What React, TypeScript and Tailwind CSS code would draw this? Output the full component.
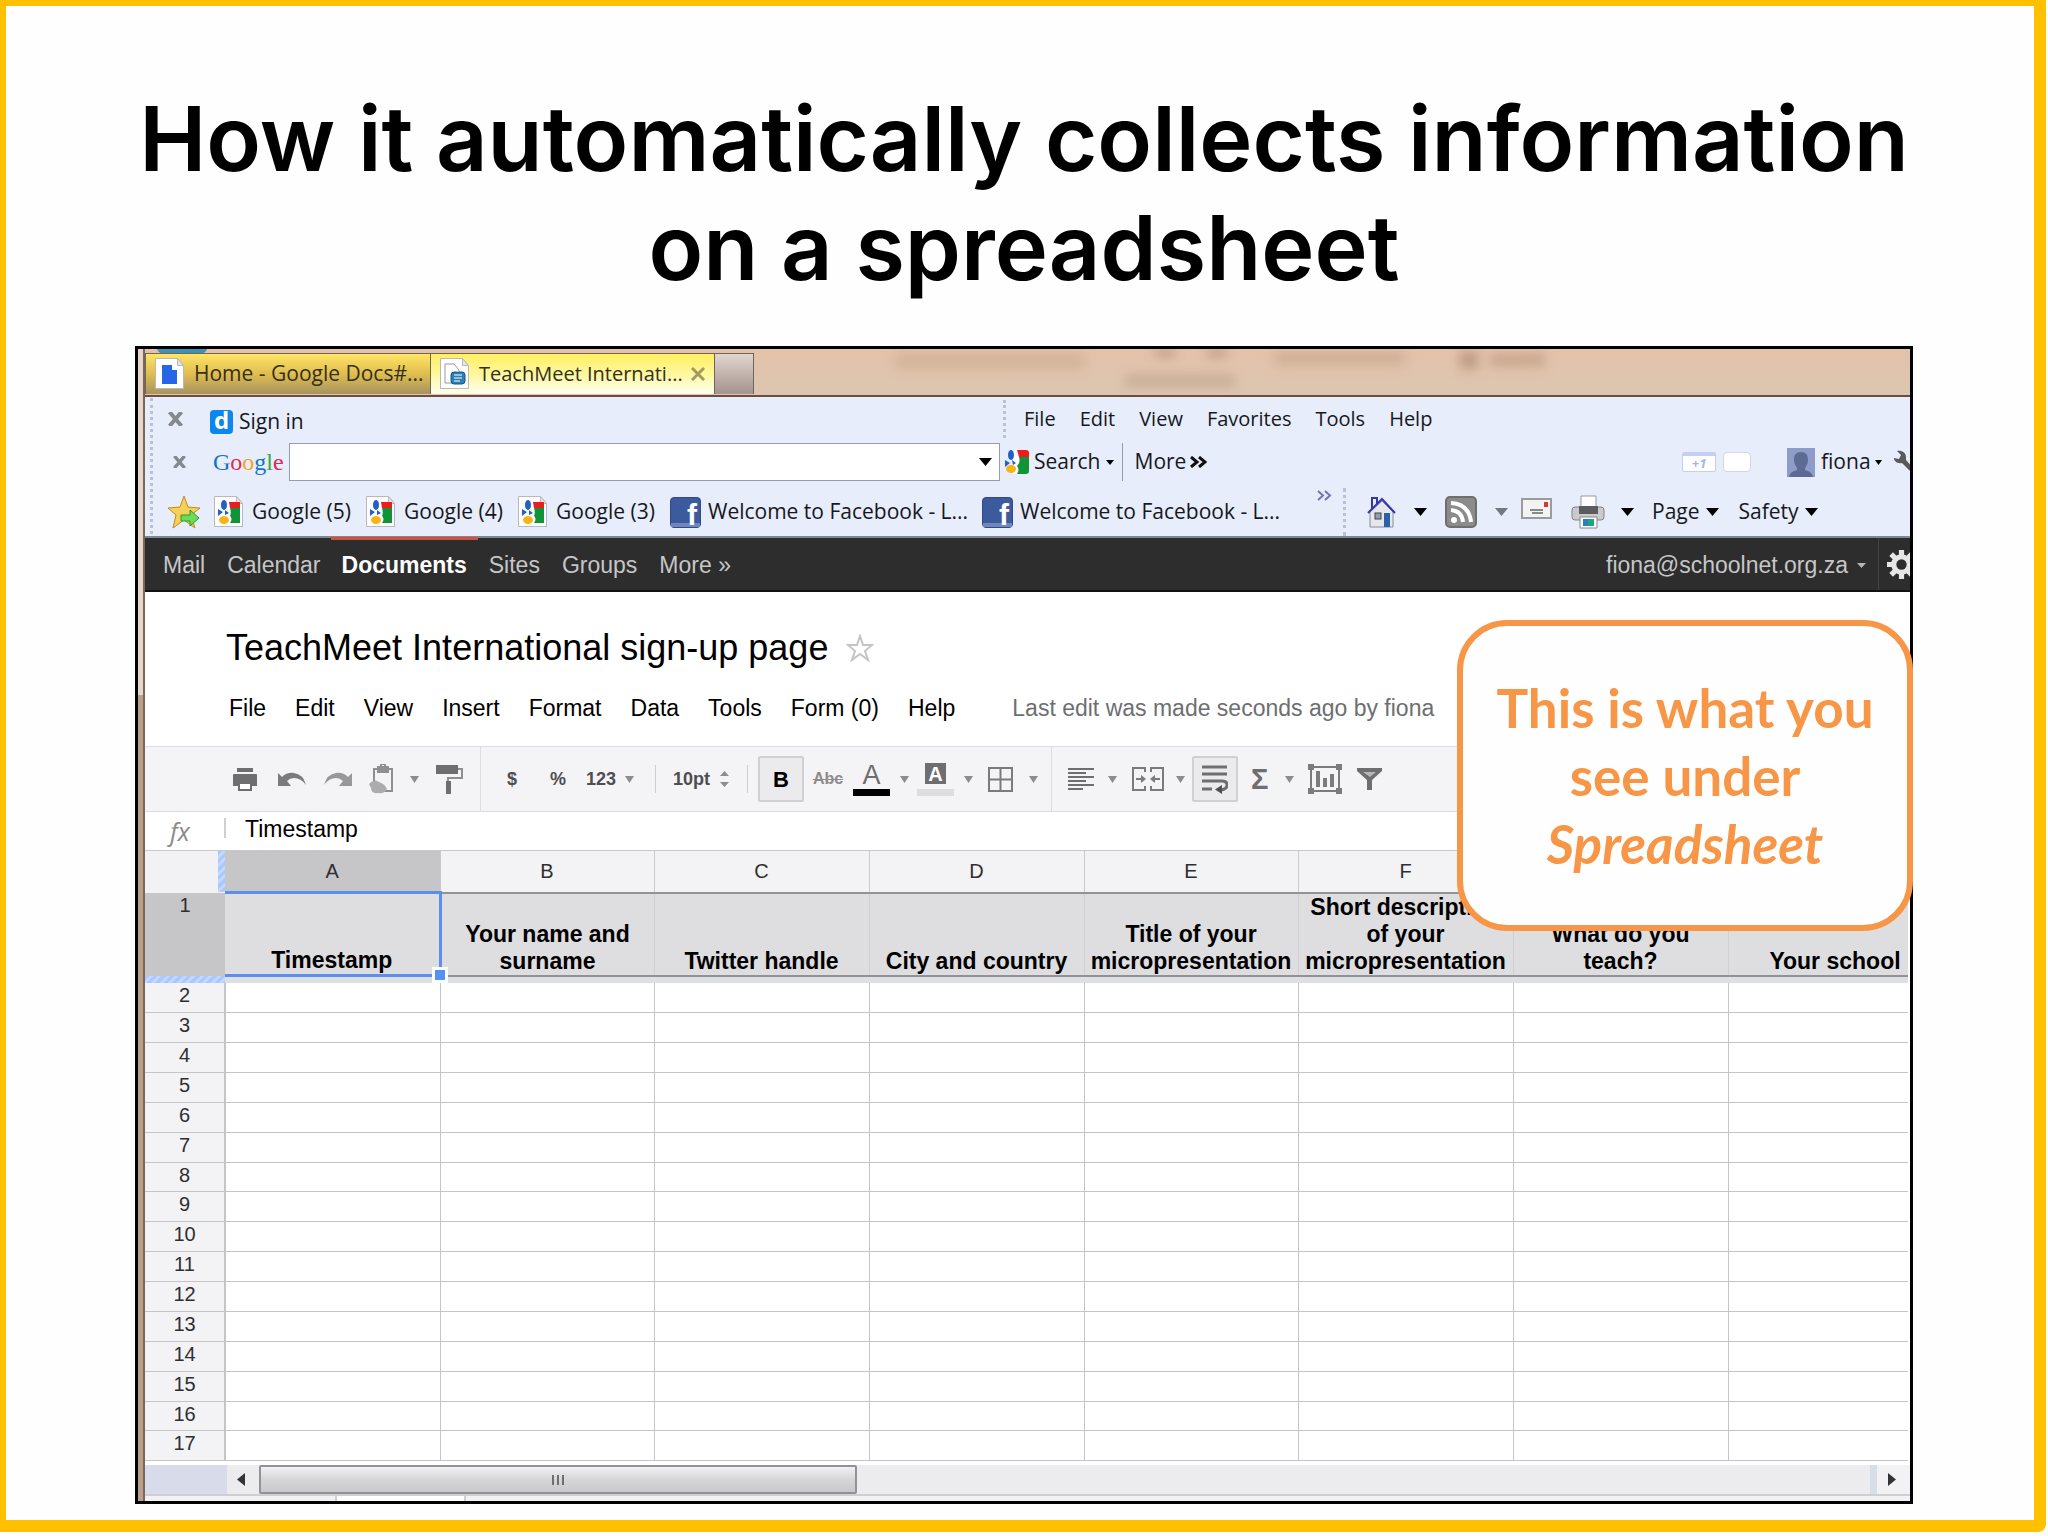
import React from 'react';

// width classes follow the sheet's own column sizes
const columns = [
  { letter: 'A', title: 'Timestamp', width: 'w-[215px]' },
  { letter: 'B', title: 'Your name and surname', width: 'w-[214px]' },
  { letter: 'C', title: 'Twitter handle', width: 'w-[215px]' },
  { letter: 'D', title: 'City and country', width: 'w-[215px]' },
  { letter: 'E', title: 'Title of your micropresentation', width: 'w-[214px]' },
  { letter: 'F', title: 'Short description of your micropresentation', width: 'w-[215px]' },
  { letter: 'G', title: 'What do you teach?', width: 'w-[215px]' },
  { letter: 'H', title: 'Your school', width: 'w-[214px]' },
];

const rows = Array.from({ length: 16 }, (_, i) => i + 2);

const Caret: React.FC<{ className?: string }> = ({ className = 'w-[13px] h-[8px] text-black' }) => (
  <svg className={`shrink-0 ${className}`} viewBox="0 0 10 6" preserveAspectRatio="none" fill="currentColor">
    <path d="M0 0h10L5 6z" />
  </svg>
);

const ToolCaret = () => <Caret className="w-[9px] h-[7px] text-[#8d8b8e]" />;

const GoogleMark: React.FC<{ className?: string }> = ({ className }) => (
  <svg className={`shrink-0 ${className}`} viewBox="0 0 24 24">
    <path d="M8 0h13a3 3 0 0 1 3 3v18a3 3 0 0 1-3 3H8z" fill="#fff" />
    <path d="M12 0h9a3 3 0 0 1 3 3v4H14z" fill="#ee1c1c" />
    <path d="M14 7h10v14a3 3 0 0 1-3 3h-9c2-3 2-6 0-8 3-3 3-6 2-9z" fill="#119438" />
    <ellipse cx="6" cy="5" rx="3" ry="5" fill="#2260c8" />
    <path d="M0 10l5 3-5 4zM7 10l4 3-3 2z" fill="#2260c8" />
    <ellipse cx="6" cy="19" rx="5" ry="4" fill="#f9b314" />
  </svg>
);

// white sheet with folded corner, used behind favicons
const Sheet: React.FC<{ children: React.ReactNode }> = ({ children }) => (
  <svg className="w-[31px] h-[32px] shrink-0" viewBox="0 0 31 32">
    <path d="M2 2h21l6 7v22H2z" fill="#9a9a9a" />
    <path d="M.5.5h22l6 7v23H.5z" fill="#fff" stroke="#b9b9b9" />
    <path d="M22.500.5v7h6z" fill="#e4e4e4" stroke="#b9b9b9" />
    {children}
  </svg>
);

const GoogleSheetIcon = () => (
  <Sheet>
    <path d="M15 6h11v6H16z" fill="#ee1c1c" />
    <path d="M16 12h10v15h-10c2-3 2-5 0-7 1-2 1-5 0-8z" fill="#119438" />
    <ellipse cx="10" cy="9" rx="3" ry="5" fill="#2260c8" />
    <path d="M4 13l5 3-5 4zM11 14l4 3-4 2z" fill="#2260c8" />
    <ellipse cx="10" cy="24" rx="5" ry="4" fill="#f9b314" />
  </Sheet>
);

const FacebookIcon = () => (
  <span className="relative w-[31px] h-[31px] shrink-0 flex justify-end rounded-sm border border-[#2f4a86] bg-[#3d5a9c] pr-[3px]">
    <span className="absolute inset-x-0 bottom-0 h-[4px] bg-[#6f87bb]" />
    <span className="relative font-['Liberation_Sans',sans-serif] text-[30px] leading-[34px] font-bold text-white">f</span>
  </span>
);

const Grip: React.FC<{ className: string }> = ({ className }) => (
  <div className={`w-0 shrink-0 border-l-3 border-dotted border-[#b9c1d3] ${className}`} />
);

const BrowserTabs = () => (
  <div className="relative h-[48px] flex items-end pb-px bg-linear-to-b from-[#e4c2a9] to-[#dcc6b0] border-b-2 border-[#6d4c41]">
    <div className="absolute inset-0 overflow-hidden">
      <div className="absolute left-[12px] -top-[8px] w-[50px] h-[13px] rounded-full bg-[#3d93b5]" />
      <div className="absolute inset-0 blur-[6px] opacity-60">
        <div className="absolute left-[750px] top-[4px] w-[190px] h-[16px] bg-[#cba98f]" />
        <div className="absolute left-[980px] top-[26px] w-[110px] h-[12px] bg-[#b99c86]" />
        <div className="absolute left-[1010px] top-0 w-[20px] h-[7px] bg-[#957462]" />
        <div className="absolute left-[1062px] top-0 w-[20px] h-[7px] bg-[#957462]" />
        <div className="absolute left-[1130px] top-[3px] w-[130px] h-[13px] bg-[#c39f86]" />
        <div className="absolute left-[1315px] top-[2px] w-[18px] h-[18px] bg-[#a58068]" />
        <div className="absolute left-[1345px] top-[5px] w-[55px] h-[12px] bg-[#b58f77]" />
      </div>
    </div>
    <div role="tablist" className="relative flex h-[41px] text-[20px] text-[#33301c]">
      <button role="tab" aria-selected="false" className="w-[286px] flex items-center gap-2 pl-[9px] border border-b-0 border-[#6f6657] bg-linear-to-b from-[#ffe566] via-[#e0bd4f] to-[#a8945e]">
        <Sheet><path d="M7 7h10v5h5v14H7z" fill="#2565e6" /></Sheet>
        <span className="whitespace-nowrap text-[21px]">Home - Google Docs#...</span>
      </button>
      <button role="tab" aria-selected="true" className="w-[283px] flex items-center gap-2 pl-[9px] border-t border-[#6f6657] bg-linear-to-b from-[#ffef5e] via-[#fff79c] to-[#fffff0]">
        <Sheet>
          <path d="M5 6h9l5 6v13H5z" fill="#fff" stroke="#999" />
          <rect x="11" y="14" width="14" height="12" rx="3" fill="#2b7fb5" stroke="#14587f" />
          <path d="M14 17h8M14 20h8M14 23h6M18 14q0-4-3-4" stroke="#fff" fill="none" />
        </Sheet>
        <span className="whitespace-nowrap">TeachMeet Internati...</span>
        <svg className="ml-auto mr-[9px] w-[14px] h-[14px] shrink-0" viewBox="0 0 14 14" stroke="#a39a5e" strokeWidth="3"><path d="M1 1l12 12M13 1L1 13" /></svg>
      </button>
      <button aria-label="New tab" className="w-[40px] border border-b-0 border-[#6f6657] bg-linear-to-b from-[#e2d6d0] to-[#a3948c]" />
    </div>
  </div>
);

const BrowserToolbars = () => (
  <div className="h-[141px] flex bg-[#e7edfa] border-b-2 border-[#7c8a90] text-[21px] text-[#16181d] whitespace-nowrap">
    <Grip className="ml-[5px] h-[136px] mt-[1px]" />
    <div className="flex-1 min-w-0">
      {/* menu row */}
      <div className="h-[43px] flex items-center pl-[15px]">
        <svg className="w-[15px] h-[14px] shrink-0" viewBox="0 0 14 14" stroke="#85898f" strokeWidth="4"><path d="M1 0l12 14M13 0L1 14" /></svg>
        <a href="#signin" className="ml-[27px] w-[793px] flex items-center gap-[6px] pt-[6px]">
          <span className="w-[23px] h-[24px] rounded bg-[#0d86f0] text-white font-bold text-[24px] leading-[20px] text-center">d</span>
          Sign in
        </a>
        <Grip className="h-[38px] mr-[18px]" />
        <nav className="flex gap-[24px] text-[20px]">
          <button>File</button>
          <button>Edit</button>
          <button>View</button>
          <button>Favorites</button>
          <button>Tools</button>
          <button>Help</button>
        </nav>
      </div>
      {/* google bar */}
      <div className="h-[44px] flex items-center pl-[20px]">
        <svg className="w-[13px] h-[12px] shrink-0" viewBox="0 0 14 14" stroke="#85898f" strokeWidth="4"><path d="M1 0l12 14M13 0L1 14" /></svg>
        <span className="ml-[27px] w-[76px] font-['Liberation_Serif',serif] text-[24px] leading-[28px]">
          <span className="text-[#1374c4]">G</span><span className="text-[#e02a50]">o</span><span className="text-[#f0a81c]">o</span><span className="text-[#1374c4]">g</span><span className="text-[#3aa843]">l</span><span className="text-[#e02a50]">e</span>
        </span>
        <div className="w-[711px] h-[38px] flex items-center border border-[#9a9cab] bg-white pr-[7px]">
          <input aria-label="Search Google" className="flex-1 h-full px-2 outline-none" />
          <button aria-label="Search history"><Caret /></button>
        </div>
        <button className="ml-[5px] flex items-center gap-[5px]">
          <GoogleMark className="w-[24px] h-[24px]" />
          Search
          <Caret className="w-[8px] h-[5px] text-black" />
        </button>
        <div className="ml-[8px] mr-[12px] w-px h-[38px] bg-[#989ba5]" />
        <button className="flex items-center gap-1">
          More
          <svg className="w-[17px] h-[12px]" viewBox="0 0 17 12" fill="none" stroke="#111" strokeWidth="3"><path d="M1 1l6 5-6 5M9 1l6 5-6 5" /></svg>
        </button>
        <div className="ml-auto w-[228px] flex items-center shrink-0">
          <span className="w-[34px] h-[20px] shrink-0 rounded-xs border border-t-4 border-[#c3cff5] bg-white text-[13px] leading-[15px] font-bold italic text-center text-[#a3b5ee]">+1</span>
          <span className="ml-[7px] w-[28px] h-[20px] shrink-0 rounded border border-[#d5d5dc] bg-white" />
          <svg className="ml-[36px] w-[28px] h-[29px] shrink-0" viewBox="0 0 28 29">
            <rect width="28" height="29" fill="#8e9cc9" />
            <path d="M14 4c5 0 7 3 7 8 0 4-2 6-3 8v2c3 1 7 2 8 7H2c1-5 5-6 8-7v-2c-1-2-3-4-3-8 0-5 2-8 7-8z" fill="#5d6b93" />
          </svg>
          <button className="ml-[6px] flex items-center gap-1">fiona<Caret className="w-[7px] h-[5px] text-black" /></button>
          <svg className="ml-[10px] w-[24px] h-[24px] shrink-0" viewBox="0 0 24 24" fill="#5a5a5c"><path d="M2 8l5 1 2-4-4-4c5-1 9 2 9 6v3l10 11-3 3L10 13c-5 1-8-2-8-5z" /></svg>
        </div>
      </div>
      {/* favourites */}
      <div className="h-[52px] flex items-center pl-[14px] pt-[4px]">
        <svg className="w-[34px] h-[34px] shrink-0" viewBox="0 0 34 34">
          <path d="M17 1l4 11 12 1-9 7 4 13-11-8-11 8 3-13-8-7 12-1z" fill="#f8cf57" stroke="#c58a22" />
          <path d="M14 20h9v-5l9 8-9 8v-5h-9z" fill="#6edb58" stroke="#2b9a32" />
        </svg>
        <a href="#g5" className="ml-[13px] w-[152px] flex items-center gap-[7px]"><GoogleSheetIcon />Google (5)</a>
        <a href="#g4" className="w-[152px] flex items-center gap-[7px]"><GoogleSheetIcon />Google (4)</a>
        <a href="#g3" className="w-[152px] flex items-center gap-[7px]"><GoogleSheetIcon />Google (3)</a>
        <a href="#fb1" className="w-[312px] flex items-center gap-[7px]"><FacebookIcon />Welcome to Facebook - L...</a>
        <a href="#fb2" className="w-[335px] flex items-center gap-[7px]"><FacebookIcon />Welcome to Facebook - L...</a>
        <svg className="w-[15px] h-[11px] mb-[34px] shrink-0" viewBox="0 0 15 11" fill="none" stroke="#7276ae" strokeWidth="2"><path d="M1 1l5 4.500-5 4.500M8 1l5 4.500-5 4.500" /></svg>
        <Grip className="ml-[11px] h-[48px]" />
        <div className="ml-[21px] flex items-center">
          <button aria-label="Home">
            <svg className="w-[29px] h-[31px]" viewBox="0 0 29 31">
              <path d="M3 15L15 4l11 11v15H3z" fill="#e6e7ec" stroke="#8a8c98" />
              <path d="M5 12V1h5v6M1 16L15 2l13 14" fill="none" stroke="#3236b0" strokeWidth="2" />
              <rect x="8" y="16" width="6" height="6" fill="#8d9fb5" stroke="#444" />
              <rect x="17" y="16" width="6" height="14" fill="#2a62a8" />
            </svg>
          </button>
          <Caret className="ml-[18px] w-[13px] h-[8px] text-black" />
          <button aria-label="Feeds" className="ml-[18px]">
            <svg className="w-[32px] h-[32px]" viewBox="0 0 32 32" fill="none" stroke="#fff" strokeWidth="4">
              <rect x="1" y="1" width="30" height="30" rx="4" fill="#8b8b8b" stroke="#6e6e6e" strokeWidth="2" />
              <circle cx="9" cy="24" r="3" fill="#fff" stroke="none" />
              <path d="M6 14q11 1 12 12M6 7q18 1 20 19" />
            </svg>
          </button>
          <Caret className="ml-[18px] w-[13px] h-[8px] text-[#74777f]" />
          <button aria-label="Mail" className="ml-[13px]">
            <svg className="w-[31px] h-[22px] mb-[6px]" viewBox="0 0 31 22">
              <rect x="1" y="1" width="29" height="19" fill="#f3f3f3" stroke="#9b9b9b" strokeWidth="2" />
              <rect x="23" y="4" width="4" height="5" fill="#d33" />
              <path d="M9 12h13M11 15h11" stroke="#8a8a8a" strokeWidth="2" />
            </svg>
          </button>
          <button aria-label="Print" className="ml-[19px]">
            <svg className="w-[34px] h-[34px]" viewBox="0 0 34 34">
              <path d="M10 1h15v12H10z" fill="#fff" stroke="#999" />
              <rect x="1" y="12" width="32" height="13" rx="3" fill="#c9c9ce" stroke="#858589" />
              <rect x="8" y="11" width="19" height="8" fill="#5c5c60" />
              <path d="M9 22h17v11H9z" fill="#fff" stroke="#888" />
              <path d="M12 24h5v7h-5z" fill="#2a7fc0" />
              <path d="M17 24h6v7h-6z" fill="#1ba586" />
            </svg>
          </button>
          <Caret className="ml-[16px] w-[13px] h-[8px] text-black" />
          <button className="ml-[18px] flex items-center gap-[6px]">Page<Caret /></button>
          <button className="ml-[20px] flex items-center gap-[6px]">Safety<Caret /></button>
        </div>
      </div>
    </div>
  </div>
);

const AccountBar = () => (
  <div className="h-[54px] flex items-stretch pl-[18px] bg-[#2d2d2e] border-b-2 border-[#111] text-[23px] text-[#c6c6c6] whitespace-nowrap">
    <nav className="flex items-stretch pt-[2px]">
      <a href="#mail" className="flex items-center mr-[22px]">Mail</a>
      <a href="#calendar" className="flex items-center">Calendar</a>
      <a href="#documents" className="-mt-[3px] flex items-center ml-[10px] mr-[11px] px-[11px] pt-[1px] border-t-3 border-t-[#cf5140] font-bold text-white">Documents</a>
      <a href="#sites" className="flex items-center">Sites</a>
      <a href="#groups" className="flex items-center mx-[22px]">Groups</a>
      <a href="#more" className="flex items-center">More »</a>
    </nav>
    <button className="ml-auto flex items-center gap-[9px] pt-[2px] pr-[12px] border-r border-[#454545]">
      fiona@schoolnet.org.za
      <Caret className="w-[9px] h-[5px] text-[#b5b5b5]" />
    </button>
    <button aria-label="Settings" className="w-[31px] pl-[8px] overflow-hidden">
      <svg className="w-[29px] h-[29px]" viewBox="0 0 28 28">
        <circle cx="14" cy="14" r="7" fill="none" stroke="#e6e6e6" strokeWidth="6" />
        <path d="M14 0v28M0 14h28M4 4l20 20M24 4L4 24" stroke="#e6e6e6" strokeWidth="5" />
        <circle cx="14" cy="14" r="5" fill="#2d2d2e" />
      </svg>
    </button>
  </div>
);

const DocHeader = () => (
  <header className="h-[154px] pl-[81px] text-black whitespace-nowrap">
    <div className="h-[84px] pt-[28px] flex items-center gap-[18px]">
      <h2 className="text-[36px] leading-[40px]">TeachMeet International sign-up page</h2>
      <button aria-label="Star">
        <svg className="w-[28px] h-[28px]" viewBox="0 0 28 28" fill="#fff" stroke="#c4c4c6" strokeWidth="2"><path d="M14 2l3 9h9l-7 6 3 9-8-6-8 6 3-9-7-6h9z" /></svg>
      </button>
    </div>
    <div className="mt-[18px] pl-[3px] flex text-[23px] leading-[28px]">
      <nav className="flex gap-[29px]">
        <button>File</button>
        <button>Edit</button>
        <button>View</button>
        <button>Insert</button>
        <button>Format</button>
        <button>Data</button>
        <button>Tools</button>
        <button>Form (0)</button>
        <button>Help</button>
      </nav>
      <span className="ml-[57px] text-[#6e6e70]">Last edit was made seconds ago by fiona</span>
    </div>
  </header>
);

const DocToolbar = () => (
  <div role="toolbar" aria-label="Formatting" className="h-[66px] flex items-center pl-[88px] bg-[#f4f3f5] border-y border-[#dddcdf] text-[18px] font-bold text-[#4e4d50]">
    <button aria-label="Print" className="w-[45px]">
      <svg className="w-[24px] h-[23px]" viewBox="0 0 24 23" fill="#6e6d70"><path d="M4 0h16v4H4zM1 6h22q1 0 1 1v11h-5v-4H5v4H0V7q0-1 1-1z" /><path d="M6 15h12v7H6z" fill="#fff" stroke="#6e6d70" strokeWidth="2" /></svg>
    </button>
    <button aria-label="Undo" className="w-[46px]">
      <svg className="w-[28px] h-[16px]" viewBox="0 0 28 16" fill="#7b7a7d"><path d="M0 2l4 4q5-5 12-4 9 1 12 12-5-7-12-7-4 0-7 3l4 5H0z" /></svg>
    </button>
    <button aria-label="Redo" className="w-[45px]">
      <svg className="w-[28px] h-[16px]" viewBox="0 0 28 16" fill="#98979a"><path d="M28 2l-4 4q-5-5-12-4-9 1-12 12 5-7 12-7 4 0 7 3l-4 5h13z" /></svg>
    </button>
    <button aria-label="Paste" className="w-[67px] flex items-center gap-[15px]">
      <svg className="w-[26px] h-[30px]" viewBox="0 0 26 30" fill="none" stroke="#8f8e91" strokeWidth="2"><path d="M5 5h18v22H5z" /><path d="M9 3h10v5H9z" fill="#8f8e91" /><path d="M12 0h4v3h-4z" /><path d="M0 20q5-6 10-2 6 2 8 7-2 5-9 4Q2 30 2 24z" fill="#acabae" stroke="none" /></svg>
      <ToolCaret />
    </button>
    <button aria-label="Paint format" className="w-[44px]">
      <svg className="w-[27px] h-[29px]" viewBox="0 0 27 29" fill="#6e6d70"><path d="M0 0h22v9H0z" /><path d="M22 4h4v9H12v4" fill="none" stroke="#8f8e91" strokeWidth="2" /><path d="M10 16h5v13h-5z" /></svg>
    </button>
    <div className="w-px h-full bg-[#dddcdf]" />
    <button className="ml-[26px] w-[43px] text-left">$</button>
    <button className="w-[36px] text-left">%</button>
    <button className="w-[69px] flex items-center gap-[9px]">123<ToolCaret /></button>
    <div className="w-px h-[28px] bg-[#cfced1]" />
    <button className="ml-[17px] w-[74px] flex items-center gap-[10px]">
      10pt
      <svg className="w-[9px] h-[16px]" viewBox="0 0 9 16" fill="#8d8b8e"><path d="M0 5l4.500-5L9 5zM0 11h9l-4.500 5z" /></svg>
    </button>
    <div className="w-px h-[28px] bg-[#cfced1]" />
    <button aria-label="Bold" aria-pressed="true" className="ml-[10px] w-[46px] h-[46px] rounded-xs border-2 border-[#d0cfd2] bg-[#ebeaec] text-[22px] text-black">B</button>
    <button aria-label="Strikethrough" className="w-[48px] text-[16px] text-[#8d8b8e] line-through">Abc</button>
    <button aria-label="Text color" className="w-[39px] flex flex-col items-center gap-[3px] pt-[2px]">
      <span className="text-[27px] leading-[22px] font-normal text-[#6e6d70]">A</span>
      <span className="w-[37px] h-[7px] bg-black" />
    </button>
    <span className="w-[26px] pl-[9px]"><ToolCaret /></span>
    <button aria-label="Fill color" className="w-[37px] flex flex-col items-center gap-[5px]">
      <span className="w-[21px] h-[21px] bg-[#6e6d70] text-[20px] leading-[22px] text-white">A</span>
      <span className="w-[37px] h-[7px] bg-[#dddcdf]" />
    </button>
    <span className="w-[34px] pl-[10px]"><ToolCaret /></span>
    <button aria-label="Borders" className="w-[63px] flex items-center gap-[16px]">
      <svg className="w-[25px] h-[25px]" viewBox="0 0 25 25" fill="none" stroke="#7b7a7d" strokeWidth="2"><path d="M1 1h23v23H1zM12.500 1v23M1 12.500h23" /></svg>
      <ToolCaret />
    </button>
    <div className="w-px h-full bg-[#dddcdf]" />
    <button aria-label="Align" className="ml-[16px] w-[64px] flex items-center gap-[14px]">
      <svg className="w-[26px] h-[22px]" viewBox="0 0 26 22" stroke="#6e6d70" strokeWidth="2"><path d="M0 1h26M0 5h18M0 9h26M0 13h18M0 17h26M0 21h15" /></svg>
      <ToolCaret />
    </button>
    <button aria-label="Merge cells" className="w-[60px] flex items-center gap-[12px]">
      <svg className="w-[32px] h-[24px]" viewBox="0 0 32 24" fill="none" stroke="#7b7a7d" strokeWidth="2"><path d="M13 5V1H1v22h12v-4M19 5V1h12v22H19v-4M4 12h6M28 12h-6" /><path d="M9 8l5 4-5 4zM23 8l-5 4 5 4z" fill="#7b7a7d" stroke="none" /></svg>
      <ToolCaret />
    </button>
    <button aria-label="Wrap text" aria-pressed="true" className="w-[46px] h-[46px] flex items-center justify-center rounded-xs border-2 border-[#d0cfd2] bg-[#ebeaec]">
      <svg className="w-[26px] h-[29px]" viewBox="0 0 26 29" fill="none" stroke="#6e6d70" strokeWidth="3"><path d="M0 2h25M0 9h25M0 16h20q5 0 5 4t-6 5M0 24h10" /><path d="M20 20v9l-7-4.500z" fill="#4e4d50" stroke="none" /></svg>
    </button>
    <button aria-label="Functions" className="ml-[13px] w-[57px] flex items-center gap-[17px] text-[29px] leading-[28px] text-[#6e6d70]">Σ<ToolCaret /></button>
    <button aria-label="Insert chart" className="w-[49px]">
      <svg className="w-[34px] h-[30px]" viewBox="0 0 34 30" fill="#7b7a7d"><path d="M3 3h28v24H3z" fill="none" stroke="#7b7a7d" strokeWidth="2" /><path d="M0 0h6v6H0zM28 0h6v6h-6zM0 24h6v6H0zM28 24h6v6h-6zM8 7h4v16H8zM15 14h4v9h-4zM22 10h4v13h-4z" /></svg>
    </button>
    <button aria-label="Filter">
      <svg className="w-[25px] h-[22px]" viewBox="0 0 25 22" fill="#6e6d70"><path d="M0 0h25v3l-10 9v10h-5V12L0 3z" /><path d="M6 4h13l-6 5z" fill="#b5b4b7" /></svg>
    </button>
  </div>
);

const FormulaBar = () => (
  <div className="h-[38px] flex items-center text-[23px] text-black">
    <span className="w-[79px] pl-[25px] font-['Open_Sans',sans-serif] text-[25px] leading-[36px] italic text-[#8a898c]">fx</span>
    <span className="w-[2px] h-[20px] mb-[6px] bg-[#d0cfd2]" />
    <input aria-label="Formula" defaultValue="Timestamp" className="ml-[19px] mb-[4px] w-[600px] h-[28px] outline-none" />
  </div>
);

const SheetGrid = () => (
  <div className="h-[615px] mr-[2px] overflow-hidden">
    <table className="w-[1797px] table-fixed border-collapse">
      <colgroup>
        <col className="w-[80px]" />
        {columns.map(c => <col key={c.letter} className={c.width} />)}
      </colgroup>
      <thead>
        <tr className="h-[42px] text-[20px] text-[#2f2f31]">
          <td className="bg-[#f2f1f3] border-t border-[#c9c8cb] p-0">
            <div className="ml-auto w-[7px] h-[41px] bg-[repeating-linear-gradient(135deg,#a9c8ff_0_3px,#c3d8ff_3px_6px)]" />
          </td>
          {columns.map(c => (
            <th key={c.letter} scope="col" className={`border-t border-r border-[#c9c8cb] font-normal p-0 ${c.letter === 'A' ? 'bg-[#c6c5c7]' : 'bg-[#f3f2f4]'}`}>{c.letter}</th>
          ))}
        </tr>
      </thead>
      <tbody>
        <tr className="h-[82px] text-[23px] leading-[27px] font-bold text-black">
          <th scope="row" className="bg-[#c6c5c7] align-top text-[20px] leading-[24px] font-normal text-[#2f2f31] p-0">1</th>
          {columns.map(c => (
            <td key={c.letter} className={`p-0 align-bottom text-center bg-[#dedddf] ${c.letter === 'A' ? 'border-3 border-l-0 border-[#5a8fee]' : 'border-y-2 border-r border-y-[#929194] border-r-[#d0cfd2]'}`}>
              <div className="relative">
                {c.title}
                {c.letter === 'A' && <span className="absolute -right-[9px] -bottom-[9px] w-[16px] h-[16px] border-3 border-white bg-[#5590f5]" />}
              </div>
            </td>
          ))}
        </tr>
        <tr className="h-[7px]">
          <td className="p-0 bg-[repeating-linear-gradient(135deg,#a9c8ff_0_3px,#c3d8ff_3px_6px)]" />
          <td colSpan={8} className="p-0 bg-[#dce0e4]" />
        </tr>
        {rows.map(n => (
          <tr key={n} className={`text-[20px] leading-[24px] ${n % 8 === 0 ? 'h-[29px]' : 'h-[30px]'}`}>
            <th scope="row" className="p-0 align-top font-normal text-[#2f2f31] bg-[#f3f2f4] border-b border-r-2 border-[#c5c4c8]">{n}</th>
            {columns.map(c => <td key={c.letter} className="p-0 border-b border-r border-[#c5c4c9]" />)}
          </tr>
        ))}
      </tbody>
    </table>
  </div>
);

const BottomScroll = () => (
  <div>
    <div className="h-[31px] flex bg-[#ecebee] border-b-2 border-[#cfced3]">
      <div className="w-[82px] bg-[#d8dbe9]" />
      <button aria-label="Scroll left" className="w-[32px] pr-1 flex items-center justify-center">
        <svg className="w-[8px] h-[13px]" viewBox="0 0 8 13" fill="#333"><path d="M8 0v13L0 6.500z" /></svg>
      </button>
      <div className="w-[598px] flex items-center justify-center gap-[3px] rounded-xs border-2 border-[#929195] bg-linear-to-b from-[#f1f0f2] via-[#d6d5d8] to-[#c9c8cb]">
        <span className="w-[2px] h-[10px] bg-[#6e6d70]" />
        <span className="w-[2px] h-[10px] bg-[#6e6d70]" />
        <span className="w-[2px] h-[10px] bg-[#6e6d70]" />
      </div>
      <div className="ml-auto w-[7px] bg-[#d8dde8]" />
      <button aria-label="Scroll right" className="w-[33px] pr-1 flex items-center justify-center bg-[#f2f1f4]">
        <svg className="w-[8px] h-[13px]" viewBox="0 0 8 13" fill="#333"><path d="M0 0v13l8-6.500z" /></svg>
      </button>
    </div>
    <div className="h-[5px] flex bg-[#f2f1f4]">
      <div className="ml-[190px] w-[131px] border-x-2 border-[#d0cfd3] bg-white" />
    </div>
  </div>
);

export default function App() {
  return (
    <div className="min-h-screen bg-white pb-[4px] pr-[2px] font-['Liberation_Sans',Arial,sans-serif]">
      <main className="min-h-[1532px] rounded-br-lg border-t-6 border-l-6 border-r-12 border-b-12 border-[#ffc000] bg-[#fefefe] pt-[78px] pl-[129px] pr-[121px] pb-[15px]">
        <h1 className="h-[262px] -mx-[40px] text-center font-['Inter',sans-serif] font-semibold text-[90px] leading-[109px] text-black">
          How it automatically collects information<br />on a spreadsheet
        </h1>

        <section className="relative border-3 border-black">
          <div className="overflow-hidden pl-[5px] bg-linear-to-b from-[#e8d6c8] from-30% to-[#b99f8c] to-30%">
            <div className="border-l-2 border-[#77665d] bg-white">
              <div className="font-['Open_Sans',sans-serif]">
                <BrowserTabs />
                <BrowserToolbars />
              </div>
              <AccountBar />
              <DocHeader />
              <DocToolbar />
              <FormulaBar />
              <SheetGrid />
              <BottomScroll />
            </div>
          </div>

          <aside className="absolute top-[271px] -right-[3px] w-[456px] h-[311px] rounded-[50px] border-6 border-[#f79646] bg-[#fefefe] flex items-center justify-center text-center font-['Lato',sans-serif] font-bold [font-variant-ligatures:none] text-[53px] leading-[68px] text-[#f79646]">
            <p>This is what you<br />see under<br /><em>Spreadsheet</em></p>
          </aside>
        </section>
      </main>
    </div>
  );
}
